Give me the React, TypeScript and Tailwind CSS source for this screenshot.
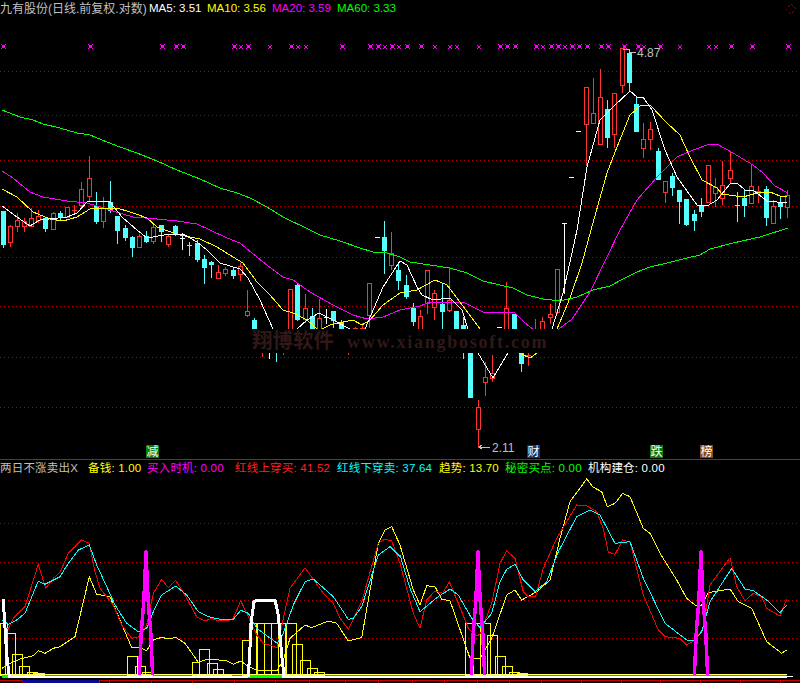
import React from "react";

const RED = "#ff3232";
const CYAN = "#54ffff";

type C = [number, number, number, number, number, "r" | "c" | "w"];
const candles: C[] = [
  [3,211,211,244,247,"c"],[10,225,226,242,246,"r"],[17,213,220,226,231,"r"],[24,218,221,226,231,"r"],[31,208,218,226,226,"r"],
  [38,210,216,220,222,"r"],[45,217,218,228,231,"c"],[53,212,213,229,229,"r"],[60,211,213,217,220,"c"],[67,207,207,217,217,"r"],
  [74,205,210,210,213,"r"],[81,182,189,205,207,"r"],[89,156,178,196,200,"r"],[96,192,206,221,223,"c"],[103,197,208,221,227,"r"],
  [110,181,202,210,212,"c"],[117,216,216,230,243,"c"],[125,225,228,237,240,"c"],[132,236,237,247,256,"c"],[139,234,236,247,247,"r"],
  [146,231,236,241,242,"c"],[153,223,227,241,243,"r"],[161,225,225,231,241,"c"],[168,234,236,244,246,"r"],[175,225,226,233,235,"c"],
  [182,233,238,238,249,"w"],[189,242,245,245,255,"c"],[197,240,243,259,261,"c"],[204,255,259,267,283,"c"],[211,261,262,264,277,"c"],
  [218,265,272,278,278,"r"],[225,267,269,273,275,"r"],[233,267,270,275,278,"c"],[240,263,266,274,280,"r"],[247,290,311,315,316,"r"],
  [254,318,320,345,345,"c"],[262,340,345,345,356,"r"],[269,340,345,345,358,"w"],[276,340,345,345,361,"c"],[283,340,345,345,354,"r"],
  [290,289,289,345,345,"r"],[297,283,285,319,320,"c"],[305,294,308,319,322,"r"],[312,308,316,335,335,"c"],[319,299,318,335,335,"r"],
  [326,309,317,317,323,"w"],[333,311,311,320,327,"c"],[341,320,322,335,335,"c"],[348,340,345,345,354,"r"],[355,327,328,328,335,"r"],
  [362,323,328,328,335,"r"],[369,283,283,315,327,"r"],[377,237,237,237,237,"w"],[384,221,237,250,273,"c"],[391,232,253,265,269,"r"],
  [398,264,270,280,289,"c"],[406,275,285,296,298,"c"],[413,303,308,321,325,"c"],[420,310,316,335,335,"r"],[427,270,270,303,313,"r"],
  [434,290,293,307,319,"r"],[442,283,304,311,329,"c"],[449,268,300,310,311,"r"],[456,311,311,328,335,"c"],[463,317,325,340,358,"c"],
  [470,340,340,397,397,"c"],[478,400,407,429,447,"r"],[485,362,377,382,395,"r"],[492,355,373,378,381,"r"],[499,327,327,327,327,"w"],
  [506,282,308,335,335,"r"],[514,314,314,335,335,"c"],[521,340,340,363,371,"c"],[528,340,355,355,365,"r"],[535,319,329,329,335,"r"],
  [542,317,321,335,335,"r"],[550,304,314,317,323,"r"],[557,269,269,312,313,"r"],[564,223,223,223,293,"w"],[571,177,177,177,177,"w"],
  [578,131,131,131,131,"w"],[586,87,87,124,165,"r"],[593,78,113,123,123,"r"],[600,69,97,144,144,"r"],[607,100,109,137,147,"c"],
  [614,93,93,134,147,"r"],[622,48,48,85,92,"r"],[629,49,53,82,91,"c"],[636,97,104,131,131,"c"],[643,123,139,148,157,"r"],
  [650,122,129,139,149,"r"],[658,148,151,179,179,"c"],[665,181,181,192,202,"r"],[672,173,176,187,195,"c"],[679,190,190,201,223,"c"],
  [686,199,199,224,225,"c"],[694,210,214,220,230,"c"],[701,198,205,211,216,"c"],[708,165,165,202,202,"r"],[715,178,187,193,206,"r"],
  [722,161,185,198,204,"r"],[730,152,170,178,183,"r"],[737,192,205,205,221,"c"],[744,190,198,205,216,"c"],[751,165,186,203,203,"r"],
  [758,186,191,193,202,"r"],[766,186,189,217,225,"c"],[773,200,206,223,223,"r"],[780,197,202,206,218,"c"],[787,190,195,207,217,"r"],
];

const ma60 = "2,110 20,117 33,120 43,124 60,128 77,133 90,135 107,142 120,147 137,153 157,161 177,170 200,179 220,188 237,193 250,198 267,207 283,217 310,230 320,235 340,241 360,248 373,252 387,253 400,257 410,262 430,265 450,268 467,273 483,281 500,285 513,288 527,295 543,299 560,301 577,297 593,290 610,286 623,279 637,272 650,267 667,263 687,258 700,255 710,249 733,243 760,237 788,228";
const ma20 = "2,171 13,178 30,192 43,197 67,201 87,203 97,206 113,211 133,217 157,219 177,221 197,224 210,230 227,238 240,243 263,262 283,277 293,280 310,292 333,305 353,315 367,319 383,317 400,310 420,306 430,302 463,302 483,312 507,312 515,313 525,323 533,329 559,329 572,319 590,292 607,257 620,230 637,200 657,177 677,157 693,150 710,144 717,144 733,153 753,165 763,173 775,186 788,193";
const ma10 = "2,189 17,197 33,212 50,219 63,221 77,217 90,209 117,208 133,213 147,218 157,227 165,230 180,235 200,239 217,247 233,257 243,263 257,282 270,295 283,310 293,313 307,320 317,329 322,329 330,325 343,322 353,320 362,325 370,320 383,305 400,293 417,290 435,280 447,285 460,302 480,329 500,345 519,353 530,358 537,353 557,329 570,298 582,263 591,230 607,173 617,147 630,115 640,106 650,105 667,123 680,135 690,157 702,180 717,188 722,194 743,197 757,193 770,192 780,196 787,196";
const ma5 = "2,206 17,217 30,226 40,220 67,217 77,213 88,201 110,202 122,217 137,230 147,238 170,234 183,234 197,242 207,250 220,263 240,269 248,278 260,300 273,329 285,340 297,329 307,320 319,313 333,320 350,329 365,329 383,287 400,261 407,265 417,287 422,295 433,300 450,298 462,310 468,329 478,353 493,378 508,353 530,340 552,329 563,293 572,253 577,230 587,167 600,120 613,107 630,91 637,97 643,97 652,110 665,150 677,177 697,205 707,206 717,200 730,184 737,183 745,190 753,190 767,201 787,203";

const bigX = [3,90,162,176,183,234,248,291,342,370,378,392,407,421,500,507,515,536,551,558,572,579,587,601,608,624,638,660,731,752,788];
const smallX = [241,270,298,306,385,399,435,450,457,479,543,565,644,680,709,716];

const topGrid = [71,115,160,206,257,306,357,407];
const lowGrid = [523,562,600,638];

const z = (s: string, ox = 0) =>
  s.trim().split(/\s+/).map((p) => {
    const [a, b] = p.split(",").map(Number);
    return `${(ox + a / 3).toFixed(1)},${(455 + b / 3).toFixed(1)}`;
  }).join(" ");

const redL = z("6,510 25,522 40,490 60,470 75,455 115,328 137,400 160,370 180,352 205,295 245,255 268,265 285,350 300,400 340,450 365,510 395,550 420,545 440,510 460,415 485,373 505,398 527,376 560,430 590,485 615,498 635,490 655,498 690,495 700,490 722,437 745,485 770,540 790,565 832,578 850,490 870,400 915,338 945,380 970,415 1000,445 1020,490 1045,523 1085,440 1135,265 1155,252 1175,258 1200,325") + " " +
  z("0,325 40,475 60,520 80,435 105,408 128,415 148,380 175,445 205,520 230,543 240,538 275,445 300,325 320,287 345,310 370,410 385,425 407,423 430,340 470,250 530,150 560,152 590,170 610,220 625,292 645,298 668,255 690,262 710,340 730,420 775,525 795,545 840,550 860,570 885,555 910,520 930,390 990,308 1010,395 1035,437 1060,415 1085,425 1100,460 1140,483 1160,432", 400);
const cyanL = z("6,495 25,508 50,495 75,475 115,378 135,388 180,365 205,325 235,285 268,270 290,330 320,395 345,450 380,505 415,530 440,520 460,470 485,420 527,393 560,420 595,470 625,485 660,493 700,493 722,466 745,475 770,520 832,565 850,535 880,450 915,380 940,372 1000,425 1045,493 1060,490 1085,455 1135,300 1170,275 1200,305") + " " +
  z("0,300 30,400 60,470 110,428 150,402 175,420 215,490 240,518 275,475 300,380 320,343 345,328 370,375 405,410 440,380 475,290 530,185 570,165 600,180 645,265 690,260 730,370 795,505 860,555 885,555 905,530 930,440 995,340 1035,402 1060,407 1100,435 1140,473 1160,450", 400);
const yellowL = z("6,640 30,625 60,612 100,602 115,587 135,595 160,580 180,575 225,545 268,365 290,418 330,425 395,578 420,577 440,587 460,555 485,547 505,552 527,547 555,565 595,622 625,612 680,617 700,628 722,618 745,635 770,645 832,645 850,615 870,550 915,510 935,518 985,498 1010,505 1045,558 1085,548 1135,265 1155,225 1175,215 1200,270") + " " +
  z("0,270 40,405 60,450 80,392 105,395 125,433 150,437 210,610 240,612 275,550 320,420 345,405 365,435 410,410 450,375 480,250 510,140 560,72 580,97 605,110 622,155 645,145 668,115 690,125 730,220 750,235 780,295 830,375 860,430 885,450 905,450 925,413 990,402 1015,440 1055,460 1100,560 1145,595 1160,585", 400);

const whiteL1 = z("6,435 10,435 15,520 20,600 28,665");
const whiteL2 = z("745,665 755,490 762,440 770,435 825,435 835,480 845,600 852,665");
const spike = (px: number) => {
  const c = px * 3;
  return z(`${c - 20},660 ${c - 18},620 ${c - 14},530 ${c - 10},480 ${c - 6},430 ${c - 4},375 ${c - 1},320 ${c},290 ${c + 1},320 ${c + 4},375 ${c + 6},430 ${c + 10},480 ${c + 14},530 ${c + 18},620 ${c + 20},660`);
};

const bars: [number, number, number][] = [
  [-6,15,505],[15,45,535],[37,68,598],[58,88,632],[80,110,650],[100,132,655],
  [382,413,604],[404,435,634],[425,455,650],
  [577,598,620],[598,628,583],[620,650,625],[640,670,643],[662,692,656],
  [726,748,556],[748,770,505],[770,792,505],[792,814,505],[814,835,505],[835,857,505],[857,886,505],[877,907,566],[900,930,616],[922,952,640],[943,973,652],
  [1396,1418,505],[1418,1440,505],[1440,1470,505],[1462,1492,540],[1484,1514,604],[1505,1535,634],[1528,1558,650],[1550,1580,655],
];

const ticks = [22,99,109,151,192,234,275,309,345,378,412,444,477,509,541,581,621,660,700,740,780];

function Top({ items }: { items: [string, string][] }) {
  return (
    <>
      {items.map(([t, c]) => (
        <span key={t} className={`whitespace-pre ${c}`}>{t}</span>
      ))}
    </>
  );
}

function Badge({ ch, bg, left }: { ch: string; bg: string; left: string }) {
  return (
    <div className={`absolute top-[445px] flex h-[13px] w-[13px] items-center justify-center text-[12px] leading-none text-white ${bg} ${left}`}>
      {ch}
    </div>
  );
}

function Candle({ c }: { c: C }) {
  const [x, h, t, b, l, k] = c;
  const col = k === "r" ? RED : k === "c" ? CYAN : "#ffffff";
  const w = x + 0.5;
  const doji = b - t < 2;
  return (
    <g shapeRendering="crispEdges">
      {h < t && <line x1={w} x2={w} y1={h} y2={t} stroke={col} />}
      {l > b && <line x1={w} x2={w} y1={b} y2={l + 1} stroke={col} />}
      {doji ? (
        <rect x={x - 2} y={t} width={5} height={1} fill={col} />
      ) : k === "r" ? (
        <rect x={x - 1.5} y={t + 0.5} width={4} height={b - t} fill="#000" stroke={col} />
      ) : (
        <rect x={x - 2} y={t} width={5} height={b - t + 1} fill={col} />
      )}
    </g>
  );
}

export default function App() {
  return (
    <div className="flex h-[683px] w-[800px] flex-col overflow-hidden bg-black font-['Liberation_Sans','Noto_Sans_CJK_SC',sans-serif] text-[11.5px] leading-none">
      <div className="relative h-[459px] shrink-0">
        <svg className="absolute inset-0" width="800" height="459" viewBox="0 0 800 459">
          {topGrid.map((y) => (
            <line key={y} x1="0" x2="800" y1={y + 0.5} y2={y + 0.5} stroke="#c00000" strokeDasharray="1 3" shapeRendering="crispEdges" />
          ))}
          {smallX.map((x) => (
            <path key={x} d={`M${x - 2} 45l4 4M${x + 2} 45l-4 4`} stroke="#ff00ff" strokeWidth="1.3" shapeRendering="crispEdges" />
          ))}
          {bigX.map((x) => (
            <g key={x} fill="#ff00ff" shapeRendering="crispEdges">
              <rect x={x - 1} y={45} width="3" height="3" />
              <rect x={x - 2} y={44} width="1" height="1" />
              <rect x={x + 2} y={44} width="1" height="1" />
              <rect x={x - 2} y={48} width="1" height="1" />
              <rect x={x + 2} y={48} width="1" height="1" />
            </g>
          ))}
          <path d="M791 4l5 5-5 5-5-5z" fill="none" stroke="#a00000" strokeDasharray="1 1" shapeRendering="crispEdges" />
          {candles.map((c) => (
            <Candle key={c[0]} c={c} />
          ))}
          <g fill="none" shapeRendering="crispEdges">
            <polyline points={ma60} stroke="#00ff00" />
            <polyline points={ma20} stroke="#ff00ff" />
            <polyline points={ma10} stroke="#ffff00" />
            <polyline points={ma5} stroke="#ffffff" />
          </g>
          <rect x="250" y="329" width="308" height="24" fill="#000" />
          <path d="M623 49h6l1 3h6" fill="none" stroke="#c0c0c0" shapeRendering="crispEdges" />
          <path d="M479 447h11M479 447l3-2M479 447l3 2" fill="none" stroke="#c0c0c0" shapeRendering="crispEdges" />
        </svg>
        <div className="relative flex h-[18px] items-center">
          <Top
            items={[
              ["九有股份(日线.前复权.对数)", "text-[12px] text-[#c0c0c0] w-[149px]"],
              ["MA5: 3.51", "text-white w-[58px]"],
              ["MA10: 3.56", "text-[#ffff00] w-[65px]"],
              ["MA20: 3.59", "text-[#ff00ff] w-[65px]"],
              ["MA60: 3.33", "text-[#00ff00]"],
            ]}
          />
        </div>
        <div className="absolute left-[637px] top-[47px] text-[12px] text-[#c0c0c0]">4.87</div>
        <div className="absolute left-[492px] top-[442px] text-[12px] text-[#c0c0c0]">2.11</div>
        <div className="absolute left-[252px] top-[330px] flex h-[23px] items-center whitespace-pre text-[#301818]">
          <span className="w-[95px] text-[20.5px] font-bold">翔博软件</span>
          <span className="font-['Liberation_Serif',serif] text-[18px] font-bold tracking-[1.75px]">www.xiangbosoft.com</span>
        </div>
        <Badge ch="减" bg="bg-[#0a7a0a]" left="left-[146px]" />
        <Badge ch="财" bg="bg-[#14386a]" left="left-[527px]" />
        <Badge ch="跌" bg="bg-[#0a7a0a]" left="left-[650px]" />
        <Badge ch="榜" bg="bg-[#8a4a10]" left="left-[700px]" />
      </div>

      <div className="relative h-[224px] shrink-0 border-t border-[#e00000]">
        <svg className="absolute left-0 top-[-1px]" width="800" height="224" viewBox="0 459 800 224">
          {lowGrid.map((y) => (
            <line key={y} x1="0" x2="800" y1={y + 0.5} y2={y + 0.5} stroke="#c00000" strokeDasharray="1 3" shapeRendering="crispEdges" />
          ))}
          {bars.map(([a, b, t], i) => {
            const x0 = Math.max(0, a / 3);
            const w = (b - a) / 3;
            const y = 455 + t / 3;
            return (
              <rect key={i} x={Math.round(x0) + 0.5} y={Math.round(y) + 0.5} width={Math.round(w)} height={675 - Math.round(y)} fill="none" stroke="#ffff00" shapeRendering="crispEdges" />
            );
          })}
          <g fill="none" shapeRendering="crispEdges">
            <polyline points={yellowL} stroke="#ffff00" />
            <polyline points={redL} stroke="#ff0000" />
            <polyline points={cyanL} stroke="#00ffff" />
          </g>
          <rect x="0" y="674" width="787" height="1.5" fill="#ffff66" />
          <rect x="2" y="675" width="6" height="3" fill="#00ff00" />
          <rect x="8" y="676" width="240" height="2" fill="#ffffff" />
          <rect x="248" y="675" width="34" height="3" fill="#00ff00" />
          <rect x="282" y="676" width="505" height="2" fill="#ffffff" />
          <rect x="787" y="676" width="6" height="1" fill="#ffffff" />
          <g fill="none" strokeLinejoin="round" shapeRendering="crispEdges">
            <polyline points={whiteL1} stroke="#fff" strokeWidth="3" />
            <polyline points={whiteL2} stroke="#fff" strokeWidth="3" />
            <polyline points={spike(146)} stroke="#ff00ff" strokeWidth="3.5" />
            <polyline points={spike(478)} stroke="#ff00ff" strokeWidth="3.5" />
            <polyline points={spike(701)} stroke="#ff00ff" strokeWidth="3.5" />
          </g>
          <rect x="0" y="680" width="800" height="1" fill="#d00000" />
          <rect x="22" y="680" width="77" height="3" fill="#0a0a90" />
          {ticks.map((x) => (
            <rect key={x} x={x} y="681" width="1" height="2" fill="#d00000" />
          ))}
        </svg>
        <div className="relative flex h-[18px] items-center tracking-[0.2px]">
          <Top
            items={[
              ["两日不涨卖出X", "text-[#c0c0c0] w-[88px]"],
              ["备钱: 1.00", "text-[#ffff00] w-[59px]"],
              ["买入时机: 0.00", "text-[#ff00ff] w-[88px]"],
              ["红线上穿买: 41.52", "text-[#ff2020] w-[102px]"],
              ["红线下穿卖: 37.64", "text-[#00ffff] w-[102px]"],
              ["趋势: 13.70", "text-[#ffff00] w-[66px]"],
              ["秘密买点: 0.00", "text-[#00ff00] w-[83px]"],
              ["机构建仓: 0.00", "text-white"],
            ]}
          />
        </div>
      </div>
    </div>
  );
}
